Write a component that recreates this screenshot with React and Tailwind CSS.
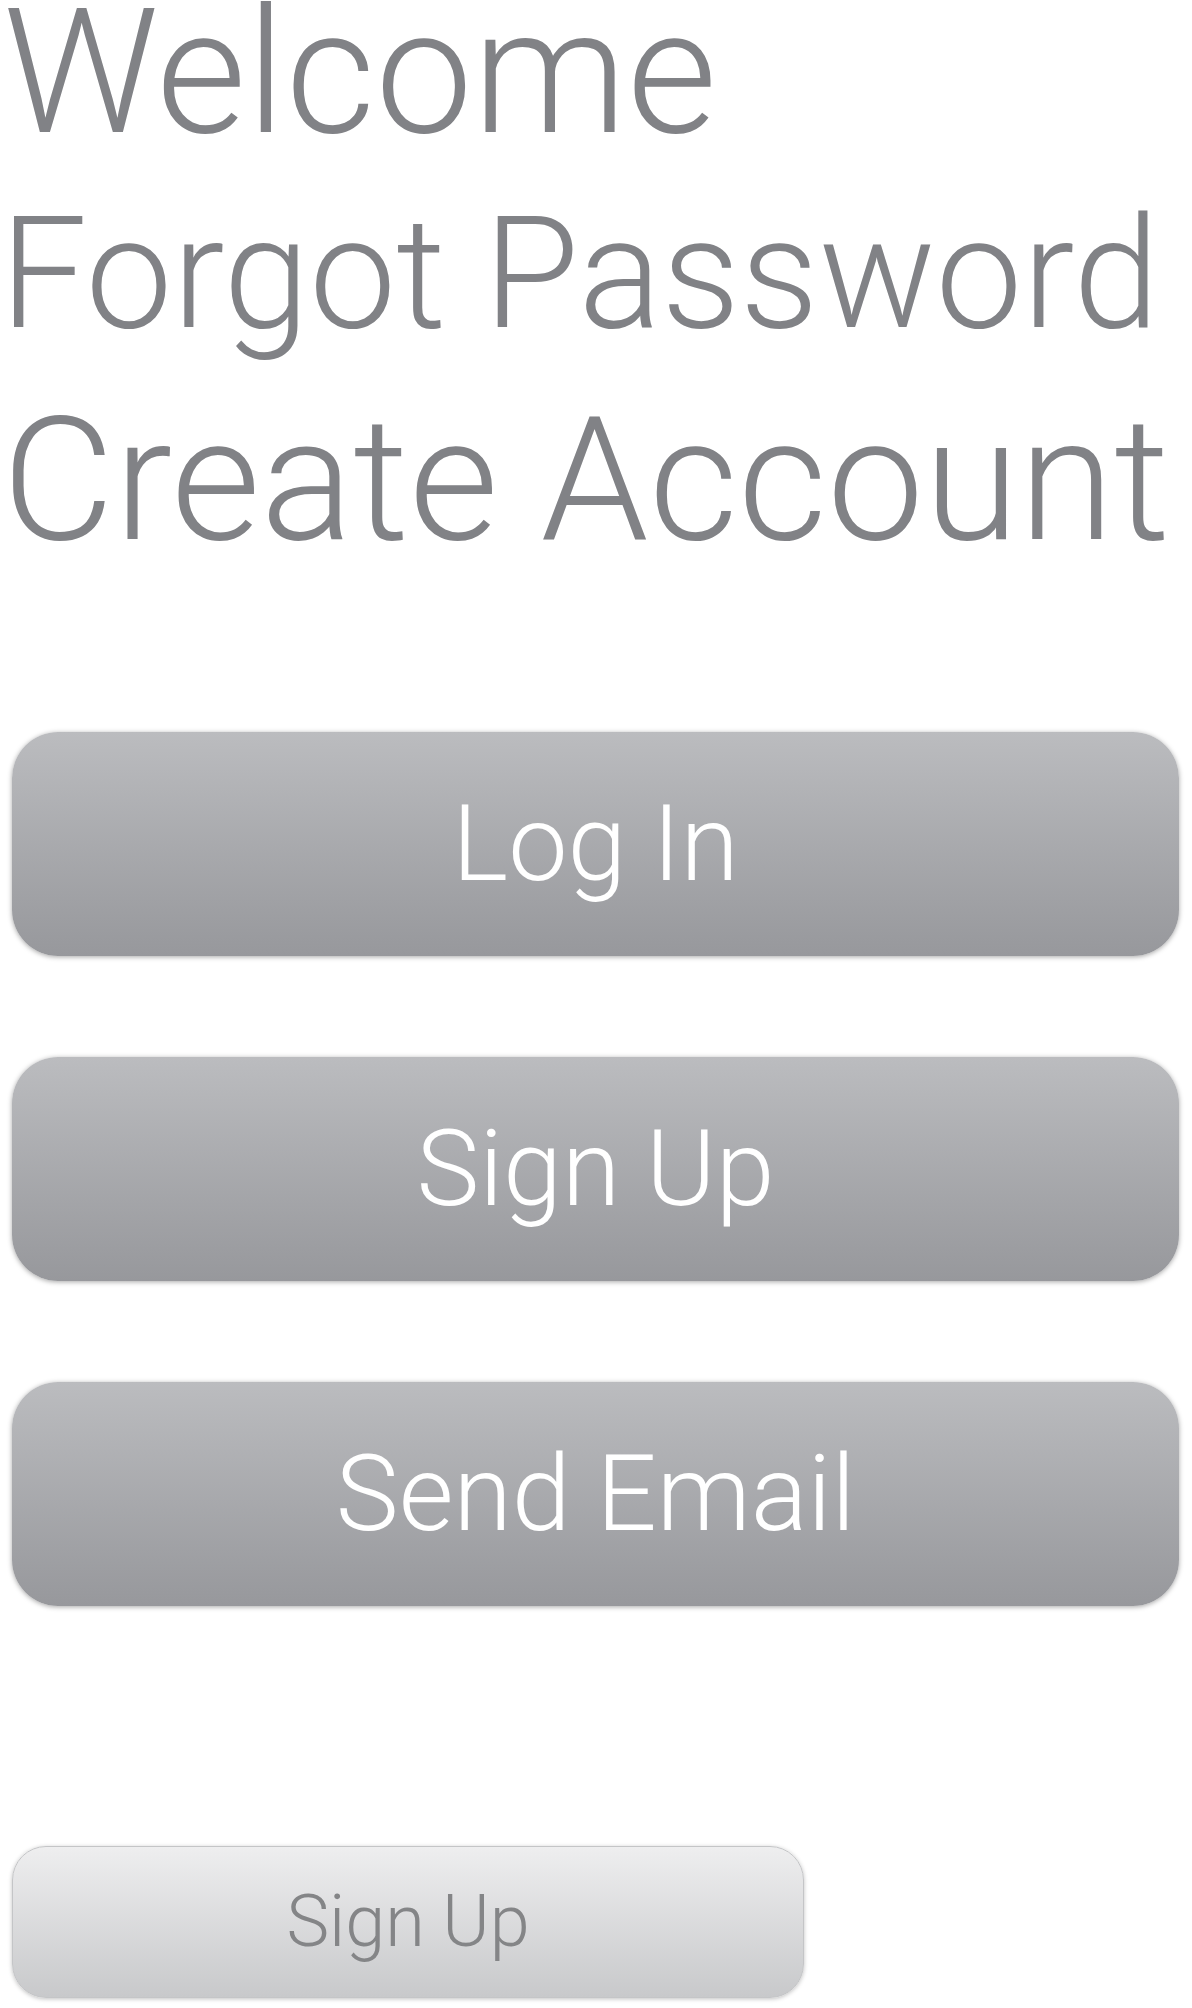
import React from 'react';

const BigButton = ({ label }) => (
    <button className="ml-[12px] w-[1167px] h-[224px] rounded-[46px] bg-gradient-to-b from-[#bbbcbf] to-[#97989c] shadow-[0_1px_5px_rgba(0,0,0,0.35)] flex items-center justify-center text-white text-[106px] font-light leading-none">
        {label}
    </button>
);

export default function App() {
    return (
        <div className="min-h-screen bg-white font-['Roboto',sans-serif] overflow-hidden">
            {/* Titles */}
            <div className="text-[#818286] font-light">
                <h1 className="text-[174px] leading-[145px] pl-[3px]">Welcome</h1>
                <h2 className="text-[155px] leading-[258px]">Forgot Password</h2>
                <h2 className="text-[173px] leading-[154px] pl-[2px]">Create Account</h2>
            </div>

            {/* Buttons */}
            <div className="mt-[175px] flex flex-col gap-[101px]">
                <BigButton label="Log In" />
                <BigButton label="Sign Up" />
                <BigButton label="Send Email" />
            </div>

            <div className="mt-[240px]">
                <button className="ml-[12px] w-[792px] h-[152px] rounded-[34px] border border-[#c4c5c7] bg-gradient-to-b from-[#eeeeef] to-[#c8c9cb] shadow-[0_1px_4px_rgba(0,0,0,0.25)] flex items-center justify-center text-[#848587] text-[72px] font-light leading-none">
                    Sign Up
                </button>
            </div>
        </div>
    );
}
